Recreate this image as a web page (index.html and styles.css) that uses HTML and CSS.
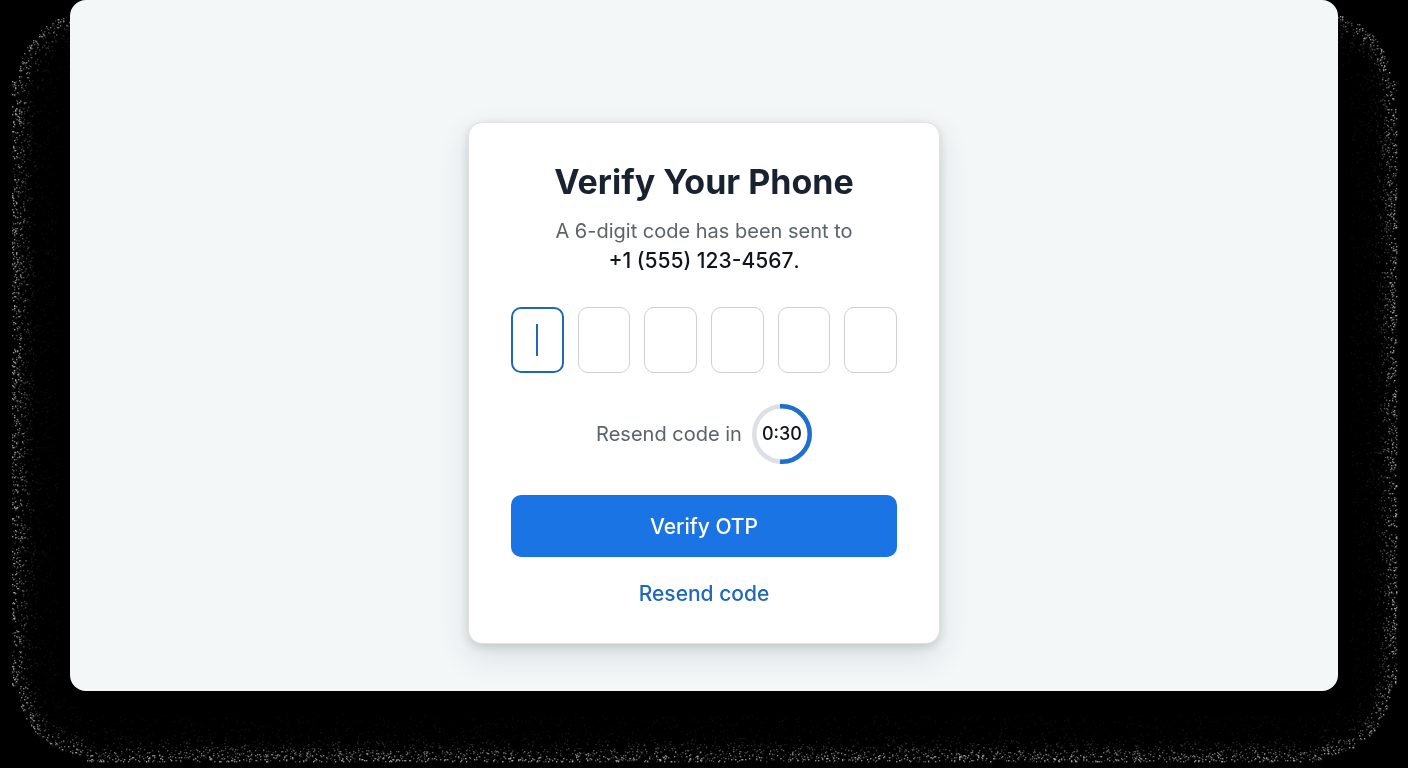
FILE: index.html
```
<!DOCTYPE html>
<html lang="en">
<head>
    <meta charset="UTF-8" />
    <meta name="viewport" content="width=device-width, initial-scale=1.0" />
    <title>Verify Your Phone</title>
    <link rel="stylesheet" href="styles.css">
</head>
<body>
    <canvas class="grain" id="grain"></canvas>
    <main class="panel">
        <form class="card">
            <h1 class="title">Verify Your Phone</h1>
            <p class="text">A 6-digit code has been sent to<br><strong class="phone">+1 (555) 123-4567</strong><span class="dot">.</span></p>
            <div class="code">
                <input class="digit current" type="text" inputmode="numeric" maxlength="1" aria-label="Digit 1">
                <input class="digit" type="text" inputmode="numeric" maxlength="1" aria-label="Digit 2">
                <input class="digit" type="text" inputmode="numeric" maxlength="1" aria-label="Digit 3">
                <input class="digit" type="text" inputmode="numeric" maxlength="1" aria-label="Digit 4">
                <input class="digit" type="text" inputmode="numeric" maxlength="1" aria-label="Digit 5">
                <input class="digit" type="text" inputmode="numeric" maxlength="1" aria-label="Digit 6">
            </div>
            <div class="timer">
                <span>Resend code in</span>
                <div class="ring">
                    <svg viewBox="0 0 60 60" width="60" height="60" aria-hidden="true">
                        <circle cx="30" cy="30" r="27.75" fill="none" stroke="#dcdfe6" stroke-width="4.5" />
                        <path d="M28 2.25h2a27.75 27.75 0 0 1 0 55.5h-2" fill="none" stroke="#1d6fd0" stroke-width="4.5" />
                    </svg>
                    <span class="time">0:30</span>
                </div>
            </div>
            <button class="btn" type="submit">Verify OTP</button>
            <a class="link" href="#">Resend code</a>
        </form>
    </main>
    <script src="script.js"></script>
</body>
</html>
```
FILE: styles.css
```
* {
    margin: 0;
    padding: 0;
    box-sizing: border-box;
}
body {
    min-height: 100vh;
    background-color: #000;
    font-family: Inter, "Liberation Sans", sans-serif;
    font-size: 20px;
    line-height: 30px;
    color: #5b6469;
}
/* speckled edge behind the panel */
.grain {
    position: absolute;
    left: 0;
    top: 0;
    width: 100%;
    height: 100%;
}
.panel {
    position: relative;
    width: 90%;
    min-height: 90vh;
    margin: 0 auto;
    padding: 122px 20px 47px;
    border-radius: 16px;
    background-color: #f3f7f8;
    overflow: hidden;
}
.card {
    display: flex;
    flex-direction: column;
    width: 100%;
    max-width: 472px;
    margin: 0 auto;
    padding: 37px 42px 34px;
    border: 1px solid #dfe0e3;
    border-radius: 14px;
    background-color: #fff;
    box-shadow: 0 3px 8px rgba(30, 40, 50, .14), 0 12px 32px rgba(30, 40, 50, .12);
    text-align: center;
}
.title {
    margin-bottom: 12px;
    font-size: 34px;
    line-height: 44px;
    font-weight: 700;
    color: #182230;
}
.text {
    margin-bottom: 31px;
}
.phone,
.dot {
    font-size: 21px;
    color: #10151c;
}
.phone {
    font-weight: 500;
}
.code {
    display: grid;
    grid-template-columns: repeat(6, 1fr);
    gap: 14px;
    margin-bottom: 31px;
}
.digit {
    width: 100%;
    height: 66px;
    border: 1px solid #cdcfd4;
    border-radius: 10px;
    background-color: #fff;
    font: inherit;
    text-align: center;
    color: #10151c;
    outline: none;
}
.digit.current {
    border: 2px solid #2068b0;
    background: #fff linear-gradient(#2068b0, #2068b0) center / 2px 32px no-repeat;
    caret-color: transparent;
}
.timer {
    display: flex;
    justify-content: center;
    align-items: center;
    gap: 10px;
    margin-bottom: 31px;
}
.ring {
    display: grid;
    place-items: center;
}
.ring svg,
.ring .time {
    grid-area: 1 / 1;
}
.time {
    font-size: 18px;
    font-weight: 500;
    color: #10151c;
}
.btn {
    height: 62px;
    margin-bottom: 22px;
    padding-top: 1px;
    border: none;
    border-radius: 10px;
    background-color: #1b74e4;
    font: inherit;
    font-size: 21px;
    font-weight: 500;
    color: #fff;
    cursor: pointer;
}
.link {
    align-self: center;
    font-size: 21px;
    font-weight: 500;
    color: #1f69b5;
    text-decoration: none;
}
```
FILE: script.js
```
var canvas = document.getElementById('grain');
var ctx = canvas.getContext('2d');
var seed = 7;

// small repeatable random generator
function rand() {
    seed = (seed * 16807) % 2147483647;
    return seed / 2147483647;
}

// how far a point lies inside the rounded frame
function inset(x, y, w, h) {
    var r = 75;
    var dx = Math.min(x - 12, w - 12 - x);
    var dy = Math.min(y - 6, h - 7 - y);
    if (dx < r && dy < r) {
        return r - 6 - Math.sqrt((r - dx) * (r - dx) + (r - dy) * (r - dy));
    }
    return Math.min(dx, dy);
}

function drawGrain() {
    var w = canvas.width = window.innerWidth;
    var h = canvas.height = window.innerHeight;
    for (var y = 0; y < h; y++) {
        for (var x = 0; x < w; x++) {
            var d = inset(x, y, w, h);
            if (d < 0 || d > 45) {
                continue;
            }
            // bright for the first pixels, then a quick fall to faint dust
            var near = Math.exp(-d * d / 200);
            if (rand() < 0.05 + near * 0.12) {
                var light = (0.06 + near * 0.64) * rand();
                ctx.fillStyle = 'rgba(225,225,225,' + light + ')';
                ctx.fillRect(x, y, 1.4, 1.4);
            }
        }
    }
}

drawGrain();
window.onresize = drawGrain;
```
